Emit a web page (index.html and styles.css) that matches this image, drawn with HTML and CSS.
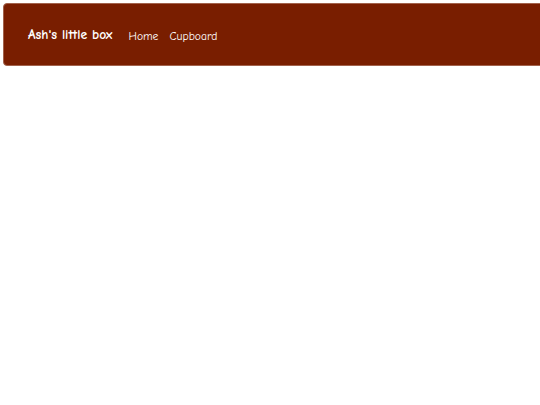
FILE: index.html
```html
<!DOCTYPE html>
<html>
<head>
<meta charset="utf-8">
<link rel="stylesheet" href="styles.css">
</head>
<body>
<nav class="navbar">
  <a class="brand" href="#">Ash's little box</a>
  <ul class="nav">
    <li><a href="#">Home</a></li>
    <li><a href="#">Cupboard</a></li>
  </ul>
</nav>
</body>
</html>
```
FILE: styles.css
```css
html, body {
  margin: 0;
  padding: 0;
  background: #ffffff;
  overflow: hidden;
}
body {
  font-family: "Comic Sans MS", "Comic Neue", "DejaVu Sans", sans-serif;
}
.navbar {
  margin: 3px 0 0 3px;
  width: 560px;
  height: 63px;
  box-sizing: border-box;
  background: #791e00;
  border: 1px solid #a2624c;
  border-radius: 4px;
  display: flex;
  align-items: center;
  padding: 0 0 0 24px;
}
.brand {
  color: #ffffff;
  font-weight: bold;
  font-size: 13.6px;
  text-decoration: none;
  margin-right: 16px;
}
.nav {
  list-style: none;
  margin: 0;
  padding: 0;
  display: flex;
  gap: 11px;
}
.nav a {
  color: #ffffff;
  font-size: 11.6px;
  text-decoration: none;
}
```
